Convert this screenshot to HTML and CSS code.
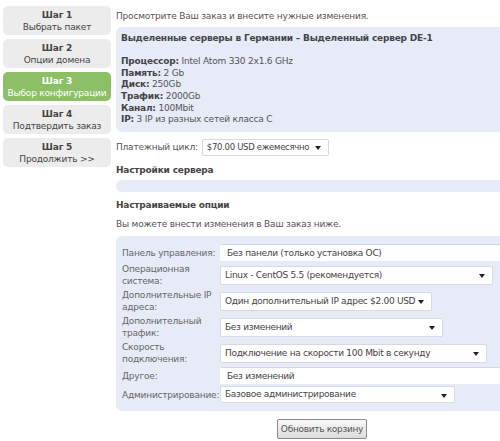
FILE: index.html
```html
<!DOCTYPE html>
<html>
<head>
<meta charset="utf-8">
<link rel="stylesheet" href="styles.css">
</head>
<body>
<div class="page">
  <div class="steps">
    <div class="step"><b>Шаг 1</b><span>Выбрать пакет</span></div>
    <div class="step"><b>Шаг 2</b><span>Опции домена</span></div>
    <div class="step active"><b>Шаг 3</b><span>Выбор конфигурации</span></div>
    <div class="step"><b>Шаг 4</b><span>Подтвердить заказ</span></div>
    <div class="step"><b>Шаг 5</b><span>Продолжить &gt;&gt;</span></div>
  </div>
  <div class="main">
    <p class="intro">Просмотрите Ваш заказ и внесите нужные изменения.</p>
    <div class="box product">
      <div class="ptitle">Выделенные серверы в Германии – Выделенный сервер DE-1</div>
      <div class="specs">
        <div><b>Процессор:</b> Intel Atom 330 2x1.6 GHz</div>
        <div><b>Память:</b> 2 Gb</div>
        <div><b>Диск:</b> 250Gb</div>
        <div><b>Трафик:</b> 2000Gb</div>
        <div><b>Канал:</b> 100Mbit</div>
        <div><b>IP:</b> 3 IP из разных сетей класса C</div>
      </div>
    </div>
    <div class="cycle">
      <span class="cycle-label">Платежный цикл:</span>
      <span class="sel small w-cycle"><span class="val">$70.00 USD ежемесячно</span></span>
    </div>
    <h3 class="sect">Настройки сервера</h3>
    <div class="box empty"></div>
    <h3 class="sect sect2">Настраиваемые опции</h3>
    <p class="note">Вы можете внести изменения в Ваш заказ ниже.</p>
    <div class="box opts">
      <div class="row">
        <div class="lbl">Панель управления:</div>
        <div class="field"><span class="inp w-wide">Без панели (только установка ОС)</span></div>
      </div>
      <div class="row">
        <div class="lbl">Операционная система:</div>
        <div class="field"><span class="sel w-os"><span class="val">Linux - CentOS 5.5 (рекомендуется)</span></span></div>
      </div>
      <div class="row">
        <div class="lbl">Дополнительные IP адреса:</div>
        <div class="field"><span class="sel w-ip"><span class="val">Один дополнительный IP адрес $2.00 USD</span></span></div>
      </div>
      <div class="row">
        <div class="lbl">Дополнительный трафик:</div>
        <div class="field"><span class="sel w-tr"><span class="val">Без изменений</span></span></div>
      </div>
      <div class="row">
        <div class="lbl">Скорость подключения:</div>
        <div class="field"><span class="sel w-sp"><span class="val">Подключение на скорости 100 Mbit в секунду</span></span></div>
      </div>
      <div class="row">
        <div class="lbl">Другое:</div>
        <div class="field"><span class="inp w-wide">Без изменений</span></div>
      </div>
      <div class="row">
        <div class="lbl">Администрирование:</div>
        <div class="field"><span class="sel small w-adm"><span class="val">Базовое администрирование</span></span></div>
      </div>
    </div>
    <div class="actions"><button class="btn">Обновить корзину</button></div>
  </div>
</div>
</body>
</html>
```

FILE: styles.css
```css
html, body {
  margin: 0;
  padding: 0;
  overflow: hidden;
  background: #fff;
}
body {
  font-family: "DejaVu Sans", Verdana, sans-serif;
  font-size: 9px;
  letter-spacing: -0.2px;
  color: #555;
}
.page {
  display: flex;
  align-items: flex-start;
  padding: 6px 0 0 3px;
  width: 600px;
}
.steps {
  width: 108px;
  flex: none;
  display: flex;
  flex-direction: column;
  gap: 4px;
}
.step {
  background: #ececec;
  border-radius: 5px;
  height: 29px;
  display: flex;
  flex-direction: column;
  align-items: center;
  justify-content: center;
  color: #444;
  line-height: 12px;
}
.step b { color: #444; }
.step.active { background: #8cbf66; color: #fff; }
.step.active b { color: #fff; }
.main {
  margin-left: 5px;
  width: 470px;
  flex: none;
}
.intro {
  margin: 4px 0 5px 0;
  line-height: 12px;
}
.box {
  background: #e6ebf7;
  border-radius: 6px;
}
.product {
  padding: 6px 5px 6px 5px;
  line-height: 11.6px;
  color: #555;
}
.ptitle {
  font-weight: bold;
  color: #444;
  margin-bottom: 11.6px;
}
.specs b { color: #444; }
.cycle {
  display: flex;
  align-items: center;
  margin-top: 7px;
  height: 17px;
}
.cycle-label { margin-right: 4px; }
.sect {
  font-size: 9px;
  font-weight: bold;
  color: #444;
  margin: 8px 0 4px 0;
  line-height: 12px;
}
.empty { height: 12px; }
.sect2 { margin-top: 7px; }
.note { margin: 7px 0 6px 0; line-height: 12px; }
.opts {
  padding: 8px 0 7px 6px;
  display: flex;
  flex-direction: column;
  gap: 1px;
}
.row {
  display: flex;
  align-items: center;
  min-height: 18px;
}
.lbl {
  width: 98px;
  flex: none;
  line-height: 12.5px;
  color: #666;
}
.field { display: flex; }
.sel, .inp {
  position: relative;
  display: block;
  box-sizing: border-box;
  height: 19px;
  line-height: 17px;
  background: #fff;
  border: 1px solid #d6d9df;
  border-radius: 2px;
  padding: 0 4px;
  color: #444;
  white-space: nowrap;
  overflow: hidden;
  letter-spacing: -0.3px;
}
.sel.small { height: 17px; line-height: 15px; }
.inp { height: 17px; line-height: 16px; border-color: #fff; border-top-color: #d2d5db; padding: 0 6px; }
.sel::after {
  content: "";
  position: absolute;
  right: 7px;
  top: 50%;
  margin-top: -1px;
  border-left: 3.5px solid transparent;
  border-right: 3.5px solid transparent;
  border-top: 4px solid #222;
}
.w-cycle { width: 127px; font-size: 8.5px; }
.w-wide { width: 300px; }
.w-os { width: 273px; }
.w-ip { width: 212px; }
.w-tr { width: 223px; }
.w-sp { width: 267px; }
.w-adm { width: 235px; }
.actions {
  display: flex;
  justify-content: center;
  margin-top: 8px;
  width: 412px;
}
.btn {
  font-family: "DejaVu Sans", Verdana, sans-serif;
  font-size: 9px;
  letter-spacing: -0.3px;
  color: #555;
  background: linear-gradient(#f8f8f8, #dcdcdc);
  border: 1px solid #8a8a8a;
  border-radius: 2px;
  height: 20px;
  width: 90px;
  padding: 0;
}
```
